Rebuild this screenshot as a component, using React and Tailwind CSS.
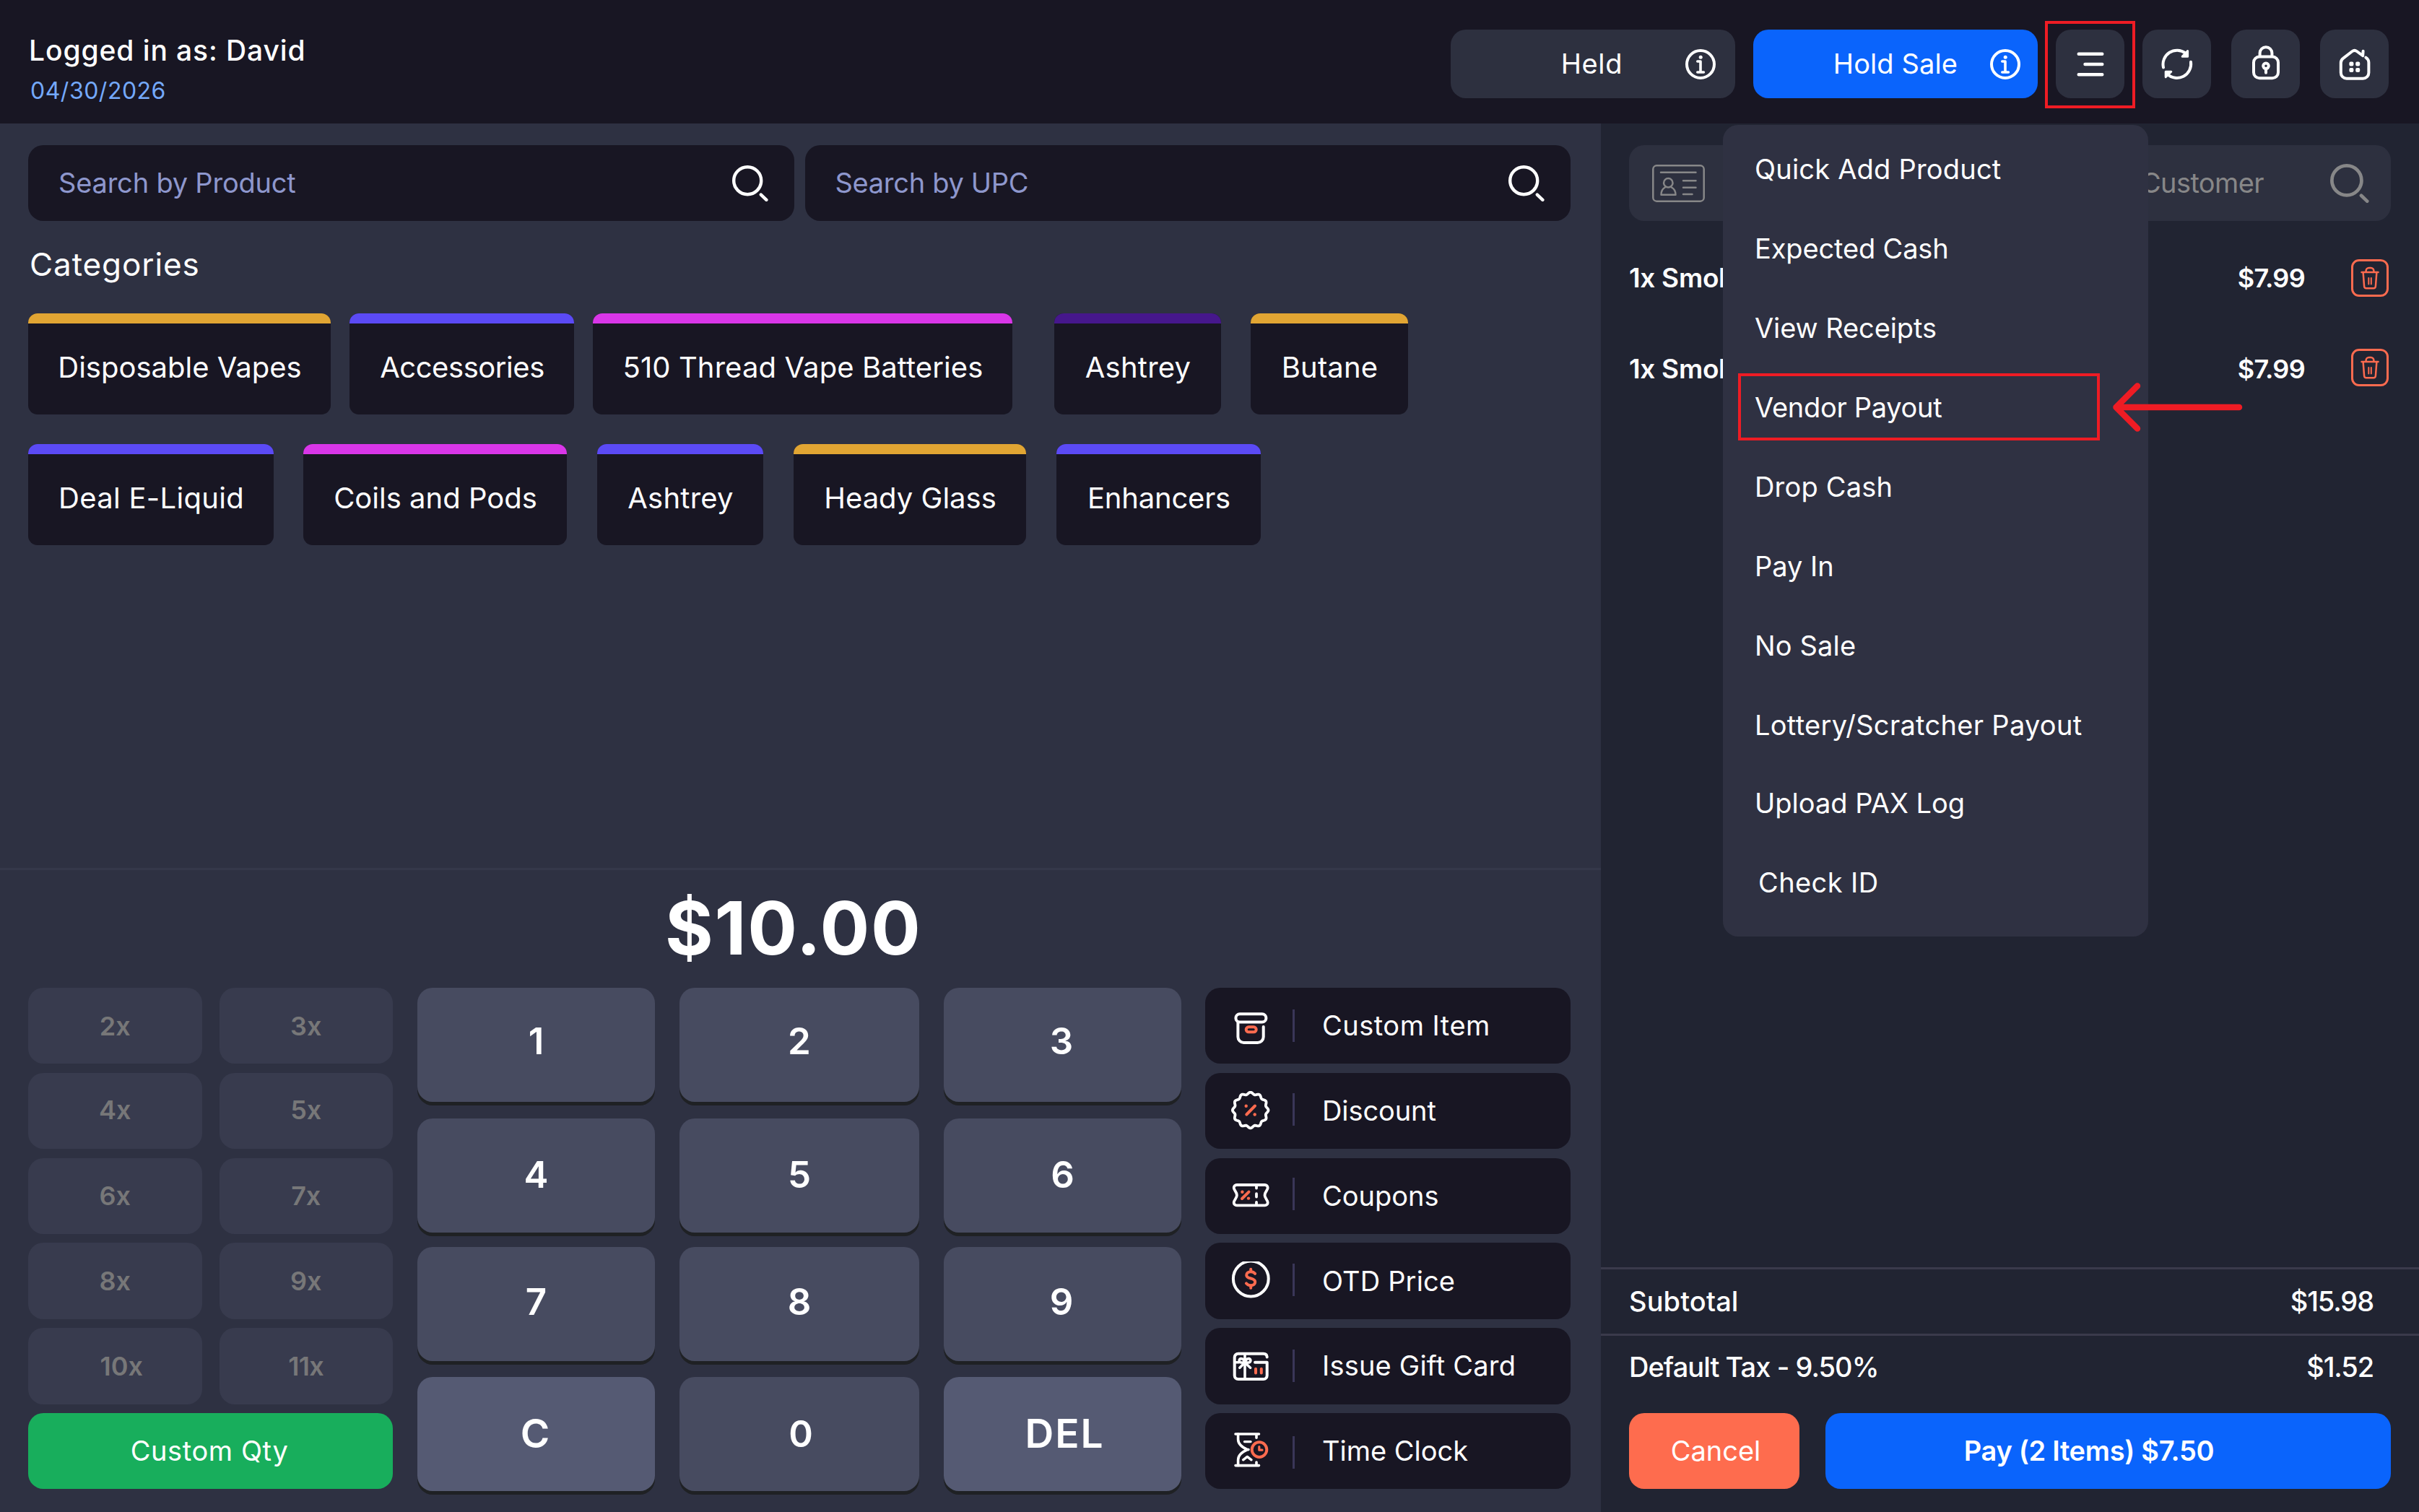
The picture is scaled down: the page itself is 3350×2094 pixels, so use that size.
const categoryRows = [
  [
    { name: "Disposable Vapes", tile: "w-[419px]", bar: "bg-[#e1a533]" },
    { name: "Accessories", tile: "w-[311px] ml-[26px] tracking-[-0.45px]", bar: "bg-[#5b4af5]" },
    { name: "510 Thread Vape Batteries", tile: "w-[581px] ml-[26px] tracking-[0.1px]", bar: "bg-[#d936e8]" },
    { name: "Ashtrey", tile: "w-[231px] ml-[58px] tracking-[0.25px]", bar: "bg-[#46178c]" },
    { name: "Butane", tile: "w-[218px] ml-[41px] tracking-[0.15px]", bar: "bg-[#e1a533]" },
  ],
  [
    { name: "Deal E-Liquid", tile: "w-[340px] tracking-[0.3px]", bar: "bg-[#5b4af5]" },
    { name: "Coils and Pods", tile: "w-[365px] ml-[41px]", bar: "bg-[#d936e8]" },
    { name: "Ashtrey", tile: "w-[230px] ml-[42px] tracking-[0.25px]", bar: "bg-[#5b4af5]" },
    { name: "Heady Glass", tile: "w-[322px] ml-[42px]", bar: "bg-[#e1a533]" },
    { name: "Enhancers", tile: "w-[283px] ml-[42px] tracking-[-0.2px]", bar: "bg-[#5b4af5]" },
  ],
];

const multipliers = [
  { label: "2x" },
  { label: "3x" },
  { label: "4x", extra: "pb-[4px]" },
  { label: "5x", extra: "pb-[4px]" },
  { label: "6x" },
  { label: "7x" },
  { label: "8x" },
  { label: "9x" },
  { label: "10x", extra: "pl-[18px]" },
  { label: "11x", extra: "tracking-[-0.7px]" },
];

const keys = [
  { label: "1", extra: "pb-[10px]" },
  { label: "2", extra: "pb-[10px]" },
  { label: "3", extra: "pb-[10px] pr-[3px]" },
  { label: "4", extra: "pb-[2px]" },
  { label: "5", extra: "pb-[2px]" },
  { label: "6", extra: "pb-[2px]" },
  { label: "7", extra: "pb-[6px]" },
  { label: "8", extra: "pb-[6px]" },
  { label: "9", extra: "pb-[6px] pr-[3px]" },
  { label: "C", fn: true, extra: "pb-[2px] pr-[3px]" },
  { label: "0", extra: "pl-[4px]" },
  { label: "DEL", fn: true, extra: "pb-[2px] pl-[6px] tracking-[2px]" },
];

const menuItems = [
  { label: "Quick Add Product", extra: "tracking-[0.2px]" },
  { label: "Expected Cash", extra: "tracking-[-0.15px]" },
  { label: "View Receipts", extra: "tracking-[-0.1px]" },
  { label: "Vendor Payout", extra: "tracking-[-0.3px]", marked: true },
  { label: "Drop Cash", extra: "tracking-[0.2px]" },
  { label: "Pay In" },
  { label: "No Sale", extra: "tracking-[0.15px]" },
  { label: "Lottery/Scratcher Payout", extra: "tracking-[0.3px]" },
  { label: "Upload PAX Log", extra: "-mt-[2px]" },
  { label: "Check ID", extra: "pl-[49px] tracking-[0.4px]" },
];

const cartItems = [
  { name: "1x Smoke", price: "$7.99" },
  { name: "1x Smoke", price: "$7.99", trash: "mb-[5px]" },
];

function InfoIcon() {
  return (
    <svg className="w-[42px] h-[42px] shrink-0" viewBox="0 0 42 42" fill="none" stroke="white" strokeWidth="4" strokeLinecap="round" strokeLinejoin="round">
      <circle cx="21" cy="21" r="19" />
      <circle cx="21.2" cy="11.3" r="2.5" fill="white" stroke="none" />
      <path d="M16.8 17h4.2v15M16.8 32h8.6" strokeWidth="3.6" />
    </svg>
  );
}

function SearchIcon({ className, stroke = "white" }) {
  return (
    <svg className={className} viewBox="0 0 50 50" fill="none" stroke={stroke} strokeWidth="4.4" strokeLinecap="round">
      <circle cx="21.2" cy="21.2" r="19" />
      <path d="M39.8 40.6 47.4 47.8" />
    </svg>
  );
}

function MenuIcon() {
  return (
    <svg className="w-[38px] h-[34px]" viewBox="0 0 38 34" fill="none" stroke="white" strokeWidth="4.4" strokeLinecap="round">
      <path d="M2.7 2.7h32.6M11.5 17h23.8M2.7 31.2h32.6" />
    </svg>
  );
}

function RefreshIcon() {
  return (
    <svg className="w-[44px] h-[44px]" viewBox="0 0 44 44" fill="none" stroke="white" strokeWidth="4" strokeLinecap="round" strokeLinejoin="round">
      <path d="M3 26.4A19.4 19.4 0 0 1 33.6 6.6" />
      <path d="M41 18.8A19.4 19.4 0 0 1 8.6 35.8" />
      <path d="M36.6 3.6v7.6h-7.4z" fill="white" strokeWidth="3" />
      <path d="M6.2 39.6v-7.4h7.6z" fill="white" strokeWidth="3" />
    </svg>
  );
}

function LockIcon() {
  return (
    <svg className="w-[40px] h-[48px] -mt-[3px]" viewBox="0 0 40 48" fill="none" stroke="white" strokeWidth="4" strokeLinecap="round">
      <rect x="3" y="15.6" width="34" height="29.6" rx="8" />
      <path d="M11.6 15V10.6a8.3 8.3 0 0 1 16.8 0V15" />
      <circle cx="20" cy="28.3" r="3.8" />
      <path d="M20 33v4.8" />
    </svg>
  );
}

function HomeIcon() {
  return (
    <svg className="w-[44px] h-[44px]" viewBox="0 0 44 44" fill="none" stroke="white" strokeWidth="4" strokeLinecap="round" strokeLinejoin="round">
      <path d="M37.4 12.6c2.6 1.8 4 3.8 4 7v14.2a8 8 0 0 1-8 8H10.8a8 8 0 0 1-8-8V20c0-2.8.8-4.6 3.4-6.4L18.6 4c2.2-1.6 4-1.6 6.2 0l8.4 6.2.4-6.4" />
      <g fill="white" stroke="none">
        <rect x="14.4" y="18.4" width="6" height="6" rx="2" />
        <rect x="23.2" y="18.4" width="6" height="6" rx="2" />
        <rect x="14.4" y="27" width="6" height="6" rx="2" />
        <rect x="23.2" y="27" width="6" height="6" rx="2" />
      </g>
    </svg>
  );
}

function IdCardIcon() {
  return (
    <svg className="w-[73px] h-[52px]" viewBox="0 0 73 52" fill="none" stroke="#878788" strokeWidth="2.5" strokeLinecap="round" strokeLinejoin="round">
      <rect x="1.3" y="1.3" width="70.4" height="49.4" rx="5" />
      <path d="M12 10.7h48.5M43 22.3h17.5M43 31.7h17.5M43 41h12.5" />
      <circle cx="22.3" cy="25.3" r="6.2" />
      <path d="M17.8 31.5c-3.6 2-5.3 5-5.3 10.2h20c0-5.2-1.8-8.2-5.6-10.2" />
    </svg>
  );
}

function TrashIcon() {
  return (
    <svg className="w-[26px] h-[34px]" viewBox="0 0 26 34" fill="none" stroke="#fd6b4f" strokeWidth="2.5" strokeLinecap="round" strokeLinejoin="round">
      <path d="M1.5 9h23M7.6 9V7a4 4 0 0 1 4-4h2.8a4 4 0 0 1 4 4v2M3.6 9l1.5 19.5a3 3 0 0 0 3 2.8h9.8a3 3 0 0 0 3-2.8L22.4 9" />
      <path d="M11.3 17v8.5M14.8 17v8.5" strokeWidth="2" />
    </svg>
  );
}

function ActionSvg({ children }) {
  return (
    <svg className="w-[54px] h-[54px] shrink-0" viewBox="0 0 54 54" fill="none" stroke="white" strokeWidth="4" strokeLinecap="round" strokeLinejoin="round">
      {children}
    </svg>
  );
}

// scalloped badge outline, 12 lobes
const badgePoints = Array.from({ length: 144 }, (_, i) => {
  const a = (i / 144) * Math.PI * 2;
  const r = 23.4 + 1.4 * Math.cos(12 * a);
  return `${(26.7 + r * Math.sin(a)).toFixed(2)},${(26.5 - r * Math.cos(a)).toFixed(2)}`;
}).join(" ");

const actions = [
  {
    label: "Custom Item",
    text: "tracking-[0.5px]",
    rule: "mb-0",
    icon: (
      <>
        <rect x="6.4" y="10.3" width="42" height="11.3" rx="5.6" />
        <path d="M9.4 22v20a8 8 0 0 0 8 8h19.3a8 8 0 0 0 8-8V28" />
        <rect x="20.7" y="28.3" width="14" height="7" rx="3.5" stroke="#fd6b4f" />
      </>
    ),
  },
  {
    label: "Discount",
    text: "tracking-[-0.1px]",
    rule: "mb-[3px]",
    icon: (
      <>
        <polygon points={badgePoints} strokeWidth="3.8" />
        <path d="M21.3 32.5 33 20.5" stroke="#fd6b4f" />
        <circle cx="20.7" cy="20.8" r="2.2" fill="#fd6b4f" stroke="none" />
        <circle cx="32.7" cy="32.5" r="2.2" fill="#fd6b4f" stroke="none" />
      </>
    ),
  },
  {
    label: "Coupons",
    rule: "mb-[6px]",
    icon: (
      <>
        <path d="M7.7 12h39a4 4 0 0 1 4 4c0 3.5-4.2 5.6-4.2 10.2s4.2 6.7 4.2 10.2a4 4 0 0 1-4 4h-39a4 4 0 0 1-4-4c0-3.5 4.2-5.6 4.2-10.2S3.7 19.5 3.7 16a4 4 0 0 1 4-4z" strokeWidth="3.8" />
        <path d="M35 13v3.6M35 24.2v4.4M35 36v4" strokeWidth="3.8" />
        <path d="M15 31 24.5 21.6" stroke="#fd6b4f" />
        <circle cx="15.4" cy="21.7" r="2.2" fill="#fd6b4f" stroke="none" />
        <circle cx="24" cy="30.6" r="2.2" fill="#fd6b4f" stroke="none" />
      </>
    ),
  },
  {
    label: "OTD Price",
    text: "tracking-[0.15px]",
    rule: "mb-[3px]",
    icon: (
      <g transform="translate(0 -1)">
        <circle cx="27.3" cy="25" r="24.4" />
        <path
          d="M33 17.8C31.6 16 29.6 15.2 27.2 15.2c-3.6 0-6 1.800-6 4.700 0 6.300 12 3 12 9.400 0 3-2.500 4.900-6 4.900-2.600 0-4.800-.9-6.200-2.800M27.200 11.700v3.500M27.200 34.200v3.600"
          stroke="#fd6b4f"
        />
      </g>
    ),
  },
  {
    label: "Issue Gift Card",
    text: "tracking-[0.2px]",
    rule: "mb-[1px]",
    icon: (
      <>
        <path d="M33 21.8h16.7v18.3a5 5 0 0 1-5 5h-35a5 5 0 0 1-5-5V14.8a5 5 0 0 1 5-5h35c3 0 4.900 1.700 5 4.600" />
        <path d="M4.700 21.800h6M19 10v35" strokeWidth="3.6" />
        <path d="M19 22c-1-4-3-5.400-5.200-5.400a2.700 2.700 0 0 0 0 5.400H19zM19 22c1-4 3-5.400 5.200-5.400a2.700 2.700 0 0 1 0 5.400H19zM19 22l-7.200 7.200M19 22l7.600 7.200" strokeWidth="3.6" />
        <path d="M34 30.800v5.600M41.800 30.800v5.600" stroke="#fd6b4f" />
      </>
    ),
  },
  {
    label: "Time Clock",
    rule: "mt-[4px]",
    icon: (
      <>
        <path d="M6 3h32.5M6 46.600h32.500" strokeWidth="3.6" />
        <path d="M9.600 3v7.500c0 7.500 7 11.500 13 14.100-6 2.600-13 6.600-13 14.100v7.900M22 24.600h2M35 4v4.200M35 42v4" strokeWidth="3.6" />
        <path d="M18.500 13.600H27M16.600 38.800l5.700-4.400 5.700 4.400" strokeWidth="3.4" />
        <circle cx="39" cy="24.6" r="10.3" stroke="#fd6b4f" fill="#181623" />
        <path d="M38.800 20.600v4.600H43" stroke="#fd6b4f" strokeWidth="3.2" />
      </>
    ),
  },
];

function HeaderButton({ className, children }) {
  return (
    <button type="button" className={`flex items-center justify-center w-[95px] h-[95px] rounded-[21px] bg-[#2d303f] ${className}`}>
      {children}
    </button>
  );
}

function Header() {
  return (
    <header className="flex justify-between h-[171px] pl-[40px] pr-[42px] bg-[#181623]">
      <div className="pt-[50px]">
        <div className="text-[39px] leading-[40px] font-medium tracking-[0.9px]">Logged in as: David</div>
        <div className="mt-[16px] ml-[2px] text-[32px] leading-[40px] tracking-[0.5px] text-[#74a9fb]">04/30/2026</div>
      </div>
      <div className="flex pt-[41px]">
        <button type="button" className="flex items-center justify-end gap-[87px] w-[394px] h-[95px] pr-[27px] rounded-[21px] bg-[#2d303f] text-[38px] tracking-[0.6px]">
          Held
          <InfoIcon />
        </button>
        <button type="button" className="flex items-center justify-end gap-[45px] w-[394px] h-[95px] ml-[25px] pr-[24px] rounded-[21px] bg-[#0a64fc] text-[38px] tracking-[0.1px]">
          Hold Sale
          <InfoIcon />
        </button>
        <HeaderButton className="relative ml-[25px]">
          <MenuIcon />
          <span className="absolute -left-[15px] -top-[12px] w-[125px] h-[121px] border-4 border-[#ee1c24]" />
        </HeaderButton>
        <HeaderButton className="ml-[25px]">
          <RefreshIcon />
        </HeaderButton>
        <HeaderButton className="ml-[28px]">
          <LockIcon />
        </HeaderButton>
        <HeaderButton className="ml-[28px]">
          <HomeIcon />
        </HeaderButton>
      </div>
    </header>
  );
}

function SearchBox({ placeholder, className }) {
  return (
    <div className={`flex items-center justify-between h-[105px] pl-[42px] pr-[36px] rounded-[21px] bg-[#181623] text-[38px] text-[#8e97cd] ${className}`}>
      {placeholder}
      <SearchIcon className="w-[50px] h-[50px]" />
    </div>
  );
}

function Categories() {
  return (
    <div className="mt-[44px] flex flex-col gap-[41px]">
      {categoryRows.map((row, i) => (
        <div key={i} className="flex">
          {row.map((c, j) => (
            <div key={j} className={`flex flex-col h-[140px] rounded-[13px] overflow-hidden bg-[#181623] text-[40px] ${c.tile}`}>
              <div className={`h-[14px] ${c.bar}`} />
              <div className="flex-1 flex items-center justify-center pb-[4px] pl-[1px] whitespace-nowrap">{c.name}</div>
            </div>
          ))}
        </div>
      ))}
    </div>
  );
}

function Register() {
  return (
    <section className="h-[892px] border-t-[3px] border-[#35384a] pl-[39px]">
      <div className="mt-[30px] pl-[882px] text-[102px] leading-[100px] font-bold tracking-[1.7px]">$10.00</div>
      <div className="flex mt-[33px]">
        <div className="grid grid-cols-2 grid-rows-6 w-[505px] h-[694.5px] gap-x-[24px] gap-y-[12.4px]">
          {multipliers.map((m) => (
            <div key={m.label} className={`flex items-center justify-center rounded-[21px] bg-[#383b4e] text-[36px] font-semibold text-[#777778] ${m.extra || ""}`}>
              {m.label}
            </div>
          ))}
          <div className="col-span-2 flex items-center justify-center pr-[3px] rounded-[21px] bg-[#18ae5c] text-[38px] tracking-[0.6px]">Custom Qty</div>
        </div>

        <div className="grid grid-cols-[329px_332px_329px] grid-rows-[181px_178px_180px_158px] gap-x-[34px] ml-[34px]">
          {keys.map((k) => (
            <div
              key={k.label}
              className={`flex items-center justify-center h-[158px] rounded-[21px] font-semibold shadow-[0_5px_0_#1f2124] ${
                k.fn ? "bg-[#555a73] text-[55px]" : "bg-[#474b60] text-[51px]"
              } ${k.extra}`}
            >
              {k.label}
            </div>
          ))}
        </div>

        <div className="flex flex-col gap-[12.4px] w-[506px] ml-[33px]">
          {actions.map((a) => (
            <div key={a.label} className={`flex items-center h-[105.4px] pl-[36px] rounded-[21px] bg-[#181623] text-[38px] ${a.text || ""}`}>
              <ActionSvg>{a.icon}</ActionSvg>
              <div className={`w-[3px] h-[45px] ml-[31px] mr-[38px] bg-[#3a3658] ${a.rule}`} />
              {a.label}
            </div>
          ))}
        </div>
      </div>
    </section>
  );
}

function Cart() {
  return (
    <aside className="flex-1 flex flex-col bg-[#212432]">
      <div className="flex items-center h-[105px] mt-[30px] ml-[39px] mr-[39px] pl-[32px] pr-[30px] rounded-[21px] bg-[#2d303f] text-[38px] tracking-[-0.6px] text-[#878788]">
        <IdCardIcon />
        <span className="ml-auto mr-[92px]">Customer</span>
        <SearchIcon className="w-[54px] h-[54px]" stroke="#878788" />
      </div>

      <div className="mt-[49px]">
        {cartItems.map((item, i) => (
          <div key={i} className="flex items-center h-[60px] mb-[66px] pl-[39px] pr-[42px] text-[37px] font-semibold">
            <span className="tracking-[-0.3px]">{item.name}</span>
            <span className="ml-auto mr-[64px] text-[36px] tracking-[-0.7px]">{item.price}</span>
            <span className={`flex items-center justify-center w-[52px] h-[52px] rounded-[11px] border-[3px] border-[#fd6b4f] ${item.trash || ""}`}>
              <TrashIcon />
            </span>
          </div>
        ))}
      </div>

      <div className="mt-auto text-[38px] font-medium">
        <div className="flex items-center justify-between h-[92px] border-t-[3px] border-[#3a3a4b] pl-[39px] pr-[63px] pb-[1px]">
          <span className="tracking-[0.1px]">Subtotal</span>
          <span className="tracking-[-1.1px]">$15.98</span>
        </div>
        <div className="flex items-center justify-between h-[91px] border-t-[3px] border-[#3a3a4b] pl-[39px] pr-[63px] pb-[1px]">
          <span className="tracking-[-0.95px]">Default Tax - 9.50%</span>
          <span className="tracking-[-1.1px]">$1.52</span>
        </div>
      </div>
      <div className="flex gap-[36px] mt-[19px] mb-[32px] pl-[39px]">
        <button type="button" className="w-[236px] h-[105px] pl-[4px] rounded-[21px] bg-[#fe6c4e] text-[38px]">Cancel</button>
        <button type="button" className="w-[783px] h-[105px] pr-[53px] rounded-[21px] bg-[#0a64fc] text-[38px] font-semibold tracking-[-0.32px]">
          Pay (2 Items) $7.50
        </button>
      </div>
    </aside>
  );
}

function MenuDropdown() {
  return (
    <div className="absolute left-[2386px] top-[173px] w-[589px] h-[1124px] pt-[6px] rounded-[21px] bg-[#2f3142]">
      {menuItems.map((item) => (
        <div key={item.label} className={`relative flex items-center h-[110px] pl-[44px] text-[38px] ${item.extra || ""}`}>
          {item.label}
          {item.marked && (
            <>
              <span className="absolute left-[21px] top-[8px] w-[501px] h-[93px] border-4 border-[#ee1c24]" />
              <svg className="absolute left-[536px] top-[14px] w-[188px] h-[82px]" viewBox="0 0 188 82" fill="none" stroke="#ee1c24" strokeWidth="8.5" strokeLinecap="round" strokeLinejoin="round">
                <path d="M38 11.5 8.5 41 38 70.5M8.5 41H179" />
              </svg>
            </>
          )}
        </div>
      ))}
    </div>
  );
}

export default function App() {
  return (
    <div className="relative w-[3350px] h-[2094px] flex flex-col overflow-hidden font-['Inter',sans-serif] text-white">
      <Header />
      <main className="flex flex-1">
        <div className="w-[2217px] flex flex-col justify-between bg-[#2e3142]">
          <div className="pl-[39px] pr-[42px] pt-[30px]">
            <div className="flex gap-[15px]">
              <SearchBox placeholder="Search by Product" className="flex-1 tracking-[-0.2px]" />
              <SearchBox placeholder="Search by UPC" className="flex-1 tracking-[-0.3px]" />
            </div>
            <h2 className="mt-[36px] ml-[2px] text-[44px] leading-[48px] tracking-[0.9px]">Categories</h2>
            <Categories />
          </div>
          <Register />
        </div>
        <Cart />
      </main>
      <MenuDropdown />
    </div>
  );
}
